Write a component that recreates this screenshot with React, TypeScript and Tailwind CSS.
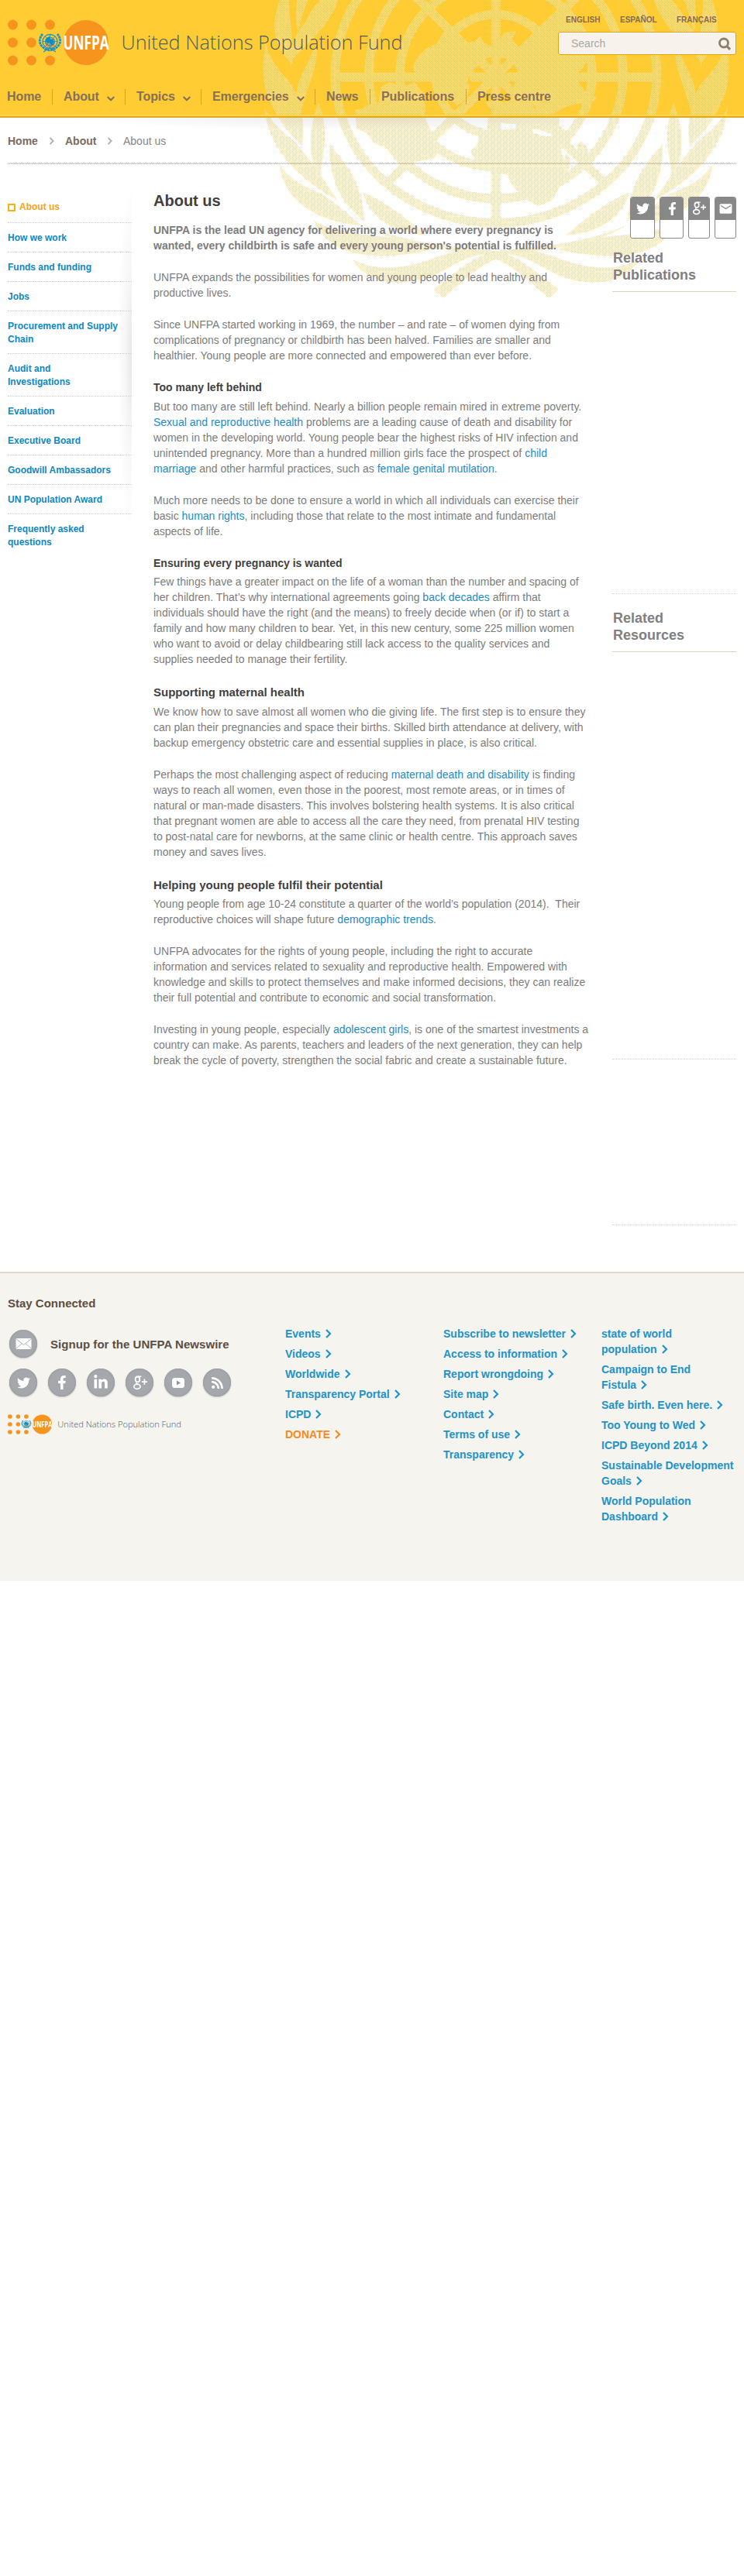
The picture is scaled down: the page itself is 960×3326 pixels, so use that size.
import React from "react";
import { FaTwitter, FaFacebookF, FaLinkedinIn, FaRss } from "react-icons/fa";
import { MdEmail } from "react-icons/md";

function Laurel() {
  return (
    <g>
      <path d="M361,0 C350,30 350,55 376,82 C380,50 372,20 373,0 Z" />
      <path d="M383,0 L398,0 C393,8 390,20 385,41 C380,25 383,10 383,0 Z" />
      <path d="M413,0 L436,0 C428,28 405,48 392,62 C385,68 378,74 375,86 C376,60 380,45 393,30 C399,18 404,9 413,0 Z" />
      <path d="M343,55 C337,85 338,115 352,138 C362,160 378,178 390,189 C394,160 390,130 374,106 C355,87 346,70 343,55 Z" />
      <path d="M408,58 C412,85 398,105 388,146 C377,125 384,105 395,85 Z" />
      <path d="M341,138 C344,175 365,220 436,259 C420,235 397,200 377,180 C360,167 346,152 341,138 Z" />
      <path d="M411,133 C425,165 418,200 412,230 C396,200 398,165 411,133 Z" />
      <path d="M425,186 C446,210 468,235 470,286 C440,262 425,235 425,186 Z" />
      <path d="M360,210 C365,255 400,285 466,291 C445,272 432,262 415,250 C390,240 370,230 360,210 Z" />
      <path d="M468,248 C478,285 510,300 550,304 C522,280 500,262 468,248 Z" />
      <path d="M405,285 C425,330 480,340 560,322 C510,298 450,310 405,285 Z" />
      <path d="M455,335 C475,370 530,375 580,345 C600,332 620,328 640,325 C600,315 570,330 540,340 C500,350 475,345 455,335 Z" />
      <path d="M470,290 C530,318 600,318 645,325 C675,335 690,350 721,374 L708,385 C680,360 655,338 630,330 C590,322 520,322 470,290 Z" />
    </g>
  );
}

function Emblem() {
  return (
    <svg width="960" height="400" viewBox="0 0 960 400" className="pointer-events-none absolute left-0 top-0 h-[400px] w-[960px]">
      <defs>
        <pattern id="weave" width="2" height="2" patternUnits="userSpaceOnUse">
          <rect x="0" y="0" width="1" height="1" fill="#fde2a0" />
          <rect x="1" y="1" width="1" height="1" fill="#fde2a0" />
        </pattern>
        <mask id="emblemMask" maskUnits="userSpaceOnUse" x="0" y="0" width="960" height="400">
          <g fill="#fff" stroke="none">
            <Laurel />
            <g transform="translate(1280 0) scale(-1 1)">
              <Laurel />
            </g>
            <g fill="none" stroke="#fff" strokeWidth="11.5">
              <ellipse cx="640" cy="96" rx="77.5" ry="77.5" />
              <ellipse cx="640" cy="96" rx="124" ry="119.5" />
              <ellipse cx="640" cy="96" rx="164" ry="160.5" />
              <ellipse cx="640" cy="96" rx="207.5" ry="192" />
              <path d="M432,99.500H848M640,0V288M497,-43L783,239M783,-43L497,239" />
            </g>
            <path d="M640,62 L624,55 620,46 614,52 602,56 592,43 580,36 571,43 564,56 551,62 543,69 536,78 533,88 536,95 548,103 560,104 562,118 580,128 590,136 602,128 606,112 602,104 612,96 612,90 620,82 628,75 640,73 660,77 668,92 664,108 662,128 650,132 640,129 626,132 640,150 700,150 716,146 732,137 752,133 766,131 770,126 757,120 748,108 742,96 752,88 758,78 762,65 750,40 738,18 728,12 720,26 709,38 690,45 676,58 668,60 661,50 666,40 650,42 Z" />
            <path d="M458,142 L468,140 476,134 487,138 492,112 503,106 520,112 535,106 548,122 549,154 560,176 565,197 560,205 540,208 515,212 497,190 484,186 473,172 460,166 Z" />
            <path d="M630,152 L640,150 722,148 722,162 731,170 738,182 726,194 736,204 735,215 722,242 714,256 706,262 694,266 680,258 666,245 658,235 656,226 644,224 628,220 612,206 607,195 615,188 618,177 628,170 Z" />
            <path d="M744,188 L750,182 757,190 762,206 754,210 746,198 Z" />
          </g>
          <g fill="#000">
            <path d="M645,158 L656,160 667,160 664,166 647,167 Z" />
            <path d="M685,167 C695,166 706,170 713,175 C704,178 696,174 687,171 Z" />
            <path d="M724,190 L732,196 728,203 733,207 726,204 Z" />
            <path d="M684,133 L693,143 691,138 Z" />
            <path d="M604,98 L608,106 613,108 611,112 604,106 Z" />
          </g>
        </mask>
      </defs>
      <rect width="960" height="400" fill="url(#weave)" mask="url(#emblemMask)" shapeRendering="crispEdges" />
    </svg>
  );
}

function Logo({ className, textColor }: { className: string; textColor: string }) {
  return (
    <svg viewBox="0 0 512 60" preserveAspectRatio="none" className={className}>
      <g fill="#f7941e">
        {[6.5, 30.5, 54.5].map((x) => [7, 30, 53].map((y) => <circle key={`${x}-${y}`} cx={x} cy={y} r="6.400" />))}
        <circle cx="101" cy="30" r="29" />
      </g>
      <g fill="none" stroke="#1b93c8">
        <ellipse cx="54.500" cy="28.500" rx="9.500" ry="9" strokeWidth="1.300" />
        <ellipse cx="54.500" cy="28.500" rx="6" ry="5.500" strokeWidth="1.200" />
        <path d="M54.500,19V38M45,28.500H64M48,22L61,35M61,22L48,35" strokeWidth=".8" />
        <path d="M45,19C38,27 41,37 54,40C68,37 71,27 64,19" strokeWidth="2.800" strokeDasharray="3 .7" />
        <path d="M47,39L54,37 62,42M62,39L54,37 46,42" strokeWidth="1.200" />
      </g>
      <path d="M50,24l4-2 1,4 3-1 2,4-3,5-3-4-3,1-2-4z" fill="#0090cf" />
      <text transform="translate(71.5 39) scale(.69 1)" fontFamily="Open Sans" fontWeight="700" fontSize="25" fill="#fff">UNFPA</text>
      <text x="146.500" y="39" fontFamily="Open Sans" fontWeight="300" fontSize="25" fill={textColor} textLength="363" lengthAdjust="spacingAndGlyphs">United Nations Population Fund</text>
    </svg>
  );
}

function Chevron({ className }: { className: string }) {
  return (
    <svg viewBox="0 0 8 12" className={className} fill="none" stroke="currentColor" strokeWidth="2.200">
      <path d="M1,1L6,6L1,11" />
    </svg>
  );
}

const NAV = [
  { label: "Home", w: "w-[67px]" },
  { label: "About", w: "w-[94px]", menu: true },
  { label: "Topics", w: "w-[98px]", menu: true },
  { label: "Emergencies", w: "w-[147px]", menu: true },
  { label: "News", w: "w-[71px]" },
  { label: "Publications", w: "w-[124px]" },
  { label: "Press centre", w: "w-[120px]" },
];

function Header() {
  return (
    <header className="h-[152px] bg-[#ffcc33]">
      <div className="relative z-10 flex h-[152px] flex-col justify-between border-b-2 border-[#e0a81c]">
        <div className="flex justify-between pl-[10px] pr-[10px]">
          <Logo className="mt-[25px] h-[60px] w-[512px]" textColor="#4c5a60" />
          <div className="w-[230px] pt-[20px]">
            <div className="flex h-[12px] pl-[10px] text-[10px] font-bold leading-[12px] text-[#7f6c58]">
              <span className="w-[70px]">ENGLISH</span>
              <span className="w-[73px]">ESPAÑOL</span>
              <span>FRANÇAIS</span>
            </div>
            <div className="mt-[9px] flex h-[30px] items-center justify-between rounded-[3px] border border-[#dfa413] bg-[#f7f3ec] pl-[16px] pr-[5px] text-[14px] text-[#aaa7a3]">
              <span className="leading-[20px]">Search</span>
              <svg viewBox="0 0 18 18" className="mt-[2px] size-[18px]" fill="none" stroke="#8c8069" strokeWidth="2.800">
                <circle cx="8" cy="7.500" r="5.500" />
                <path d="M11.800,11.500L16,15.800" strokeWidth="3.200" />
              </svg>
            </div>
          </div>
        </div>
        <div className="border-b-2 border-[#ffd552] pb-[13px]">
          <nav className="flex h-[20px] text-[16px] font-bold text-[#84705c]">
            {NAV.map((n, i) => (
              <div key={n.label} className={`${n.w} flex h-[20px] items-center ${i ? "border-l border-[#d3a231] pl-[14px]" : "pl-[9px]"}`}>
                <span className="leading-[20px] tracking-[-0.1px]">{n.label}</span>
                {n.menu && (
                  <svg viewBox="0 0 10 7" className="ml-[10px] mt-[4px] h-[7px] w-[10px]" fill="none" stroke="currentColor" strokeWidth="2">
                    <path d="M.7,1L5,5.300L9.300,1" />
                  </svg>
                )}
              </div>
            ))}
          </nav>
        </div>
      </div>
    </header>
  );
}

const SIDE = ["How we work", "Funds and funding", "Jobs", "Procurement and Supply Chain", "Audit and Investigations", "Evaluation", "Executive Board", "Goodwill Ambassadors", "UN Population Award"];

function Sidebar() {
  return (
    <aside className="flex h-[470px] w-[160px] text-[12px] font-bold leading-[17px] text-[#0d88c3]">
      <ul className="w-[160px] bg-[radial-gradient(ellipse_18px_230px_at_100%_45%,#e6e6e6_0%,#f6f6f6_45%,transparent_100%)]">
        <li className="flex items-center gap-[5px] border-b border-dotted border-[#cfcfb4] pb-[11px] pt-[9px] text-[#fb9f16]">
          <span className="mt-[1px] size-[10px] border-2 border-[#fbb012]" />
          About us
        </li>
        {SIDE.map((s) => (
          <li key={s} className="border-b border-dotted border-[#cfcfb4] pb-[9px] pt-[11px]">
            <div className={s.startsWith("Audit") ? "w-[100px]" : "w-[150px]"}>{s}</div>
          </li>
        ))}
        <li className="py-[11px]">
          <div className="w-[120px]">Frequently asked questions</div>
        </li>
      </ul>
    </aside>
  );
}

function A({ children }: { children: React.ReactNode }) {
  return <a className="text-[#1f8ac4]">{children}</a>;
}

function Article() {
  return (
    <main className="w-[592px] whitespace-nowrap pl-[28px] text-[14px] leading-[20px] text-[#7c7c7c]">
      <h1 className="-mt-[3px] text-[20px] font-bold leading-[24px] text-[#3f3f3f]">About us</h1>
      <p className="mt-[16px] font-bold">UNFPA is the lead UN agency for delivering a world where every pregnancy is<br />wanted, every childbirth is safe and every young person's potential is fulfilled.</p>
      <p className="mt-[21px]">UNFPA expands the possibilities for women and young people to lead healthy and<br />productive lives.</p>
      <p className="mt-[21px]">Since UNFPA started working in 1969, the number – and rate – of women dying from<br />complications of pregnancy or childbirth has been halved. Families are smaller and<br />healthier. Young people are more connected and empowered than ever before.</p>
      <h3 className="mt-[21px] font-bold text-[#3f3f3f]">Too many left behind</h3>
      <p className="mt-[5px]">But too many are still left behind. Nearly a billion people remain mired in extreme poverty.<br /><A>Sexual and reproductive health</A> problems are a leading cause of death and disability for<br />women in the developing world. Young people bear the highest risks of HIV infection and<br />unintended pregnancy. More than a hundred million girls face the prospect of <A>child</A><br /><A>marriage</A> and other harmful practices, such as <A>female genital mutilation</A>.</p>
      <p className="mt-[21px]">Much more needs to be done to ensure a world in which all individuals can exercise their<br />basic <A>human rights</A>, including those that relate to the most intimate and fundamental<br />aspects of life.</p>
      <h3 className="mt-[21px] font-bold text-[#3f3f3f]">Ensuring every pregnancy is wanted</h3>
      <p className="mt-[4px]">Few things have a greater impact on the life of a woman than the number and spacing of<br />her children. That’s why international agreements going <A>back decades</A> affirm that<br />individuals should have the right (and the means) to freely decide when (or if) to start a<br />family and how many children to bear. Yet, in this new century, some 225 million women<br />who want to avoid or delay childbearing still lack access to the quality services and<br />supplies needed to manage their fertility.</p>
      <h3 className="mt-[23px] text-[15px] font-bold text-[#3f3f3f]">Supporting maternal health</h3>
      <p className="mt-[5px]">We know how to save almost all women who die giving life. The first step is to ensure they<br />can plan their pregnancies and space their births. Skilled birth attendance at delivery, with<br />backup emergency obstetric care and essential supplies in place, is also critical.</p>
      <p className="mt-[21px]">Perhaps the most challenging aspect of reducing <A>maternal death and disability</A> is finding<br />ways to reach all women, even those in the poorest, most remote areas, or in times of<br />natural or man-made disasters. This involves bolstering health systems. It is also critical<br />that pregnant women are able to access all the care they need, from prenatal HIV testing<br />to post-natal care for newborns, at the same clinic or health centre. This approach saves<br />money and saves lives.</p>
      <h3 className="mt-[23px] text-[15px] font-bold text-[#3f3f3f]">Helping young people fulfil their potential</h3>
      <p className="mt-[4px]">Young people from age 10-24 constitute a quarter of the world’s population (2014). &nbsp;Their<br />reproductive choices will shape future <A>demographic trends</A>.</p>
      <p className="mt-[21px]">UNFPA advocates for the rights of young people, including the right to accurate<br />information and services related to sexuality and reproductive health. Empowered with<br />knowledge and skills to protect themselves and make informed decisions, they can realize<br />their full potential and contribute to economic and social transformation.</p>
      <p className="mt-[21px]">Investing in young people, especially <A>adolescent girls</A>, is one of the smartest investments a<br />country can make. As parents, teachers and leaders of the next generation, they can help<br />break the cycle of poverty, strengthen the social fabric and create a sustainable future.</p>
    </main>
  );
}

function GooglePlus({ className }: { className: string }) {
  return (
    <svg viewBox="0 0 20 20" className={className} fill="none" stroke="currentColor">
      <ellipse cx="6.800" cy="5.200" rx="3" ry="3.600" strokeWidth="1.900" />
      <path d="M7,1.300H12M6,8.800C4.500,10.200 5.500,11 7.500,12.200" strokeWidth="1.500" />
      <ellipse cx="6.300" cy="15" rx="4.300" ry="3.200" strokeWidth="1.800" />
      <path d="M12.500,8.500H20M16.200,4.700V12.300" strokeWidth="1.800" />
    </svg>
  );
}

const SHARE = [
  { w: "w-[32px]", icon: <FaTwitter className="size-[17px]" /> },
  { w: "w-[31px]", icon: <FaFacebookF className="ml-[2px] size-[17px]" /> },
  { w: "w-[28px]", icon: <GooglePlus className="-mt-[2px] size-[18px]" /> },
  { w: "w-[28px]", icon: <MdEmail className="size-[19px]" /> },
];

function Related() {
  return (
    <section className="w-[160px] text-[18px] font-bold leading-[22px] text-[#808080]">
      <div className="mt-[4px] flex justify-end gap-[6px]">
        {SHARE.map((s, i) => (
          <div key={i} className={`${s.w} h-[54px] overflow-hidden rounded-[3px] border border-[#888] bg-white`}>
            <div className="flex h-[29px] items-center justify-center bg-[#888] text-white">{s.icon}</div>
          </div>
        ))}
      </div>
      <h2 className="mt-[14px] h-[55px] border-b border-[#d5d8bf] pl-px">Related<br />Publications</h2>
      <div className="h-[390px] border-b border-dotted border-[#d5d8bf]" />
      <h2 className="mt-[20px] h-[55px] border-b border-[#d5d8bf] pl-px">Related<br />Resources</h2>
      <div className="h-[526px] border-b border-dotted border-[#d5d8bf]" />
      <div className="h-[214px] border-b border-dotted border-[#d5d8bf]" />
    </section>
  );
}

function FooterLinks({ links, className }: { links: string[]; className: string }) {
  return (
    <ul className={`${className} flex flex-col gap-[6px] text-[14px] font-bold leading-[20px] text-[#2193c9]`}>
      {links.map((l) => (
        <li key={l} className={l === "DONATE" ? "text-[#f6891f]" : ""}>
          {l.split("|").map((part, i, all) => (
            <div key={part} className="flex items-center whitespace-nowrap">
              {part}
              {i === all.length - 1 && <Chevron className="ml-[6px] h-[12px] w-[8px]" />}
            </div>
          ))}
        </li>
      ))}
    </ul>
  );
}

const DISC = "flex size-[36px] items-center justify-center rounded-full bg-[#a4a7ab] text-white shadow-[0_1px_2px_#bbb,inset_0_0_2px_#888]";

function Footer() {
  return (
    <footer className="relative flex h-[399px] border-t-2 border-[#e0d8c9] bg-[#f6f4ef] pl-[10px]">
      <div className="w-[358px] pt-[29px] text-[#5b4e43]">
        <h2 className="text-[15px] font-bold leading-[20px]">Stay Connected</h2>
        <div className="ml-[2px] mt-[24px] flex h-[36px] items-center gap-[17px]">
          <div className={DISC}>
            <svg viewBox="0 0 20 14" className="h-[14px] w-[21px]" stroke="#a4a7ab" strokeWidth=".9">
              <rect width="20" height="14" rx="1" fill="#fff" stroke="none" />
              <path d="M0,.5L10,8.500L20,.5M0,13.500L7.500,6.800M20,13.500L12.500,6.800" fill="none" />
            </svg>
          </div>
          <span className="pt-px text-[15px] font-bold leading-[20px] tracking-[0.05px]">Signup for the UNFPA Newswire</span>
        </div>
        <div className="ml-[2px] mt-[14px] flex gap-[14px]">
          <div className={DISC}><FaTwitter className="size-[17px]" /></div>
          <div className={DISC}><FaFacebookF className="size-[18px]" /></div>
          <div className={DISC}><FaLinkedinIn className="size-[20px]" /></div>
          <div className={DISC}><GooglePlus className="size-[19px]" /></div>
          <div className={DISC}>
            <svg viewBox="0 0 16 13" className="h-[13px] w-[16px]">
              <rect width="16" height="13" rx="3.500" fill="#fff" />
              <path d="M6,3.500L11,6.500L6,9.500Z" fill="#8f9296" />
            </svg>
          </div>
          <div className={DISC}><FaRss className="size-[17px]" /></div>
        </div>
        <Logo className="mt-[23px] h-[26px] w-[225px]" textColor="#55585a" />
      </div>
      <FooterLinks className="w-[204px] pt-[68px]" links={["Events", "Videos", "Worldwide", "Transparency Portal", "ICPD", "DONATE"]} />
      <FooterLinks className="w-[204px] pt-[68px]" links={["Subscribe to newsletter", "Access to information", "Report wrongdoing", "Site map", "Contact", "Terms of use", "Transparency"]} />
      <FooterLinks className="w-[180px] pt-[68px]" links={["state of world|population", "Campaign to End|Fistula", "Safe birth. Even here.", "Too Young to Wed", "ICPD Beyond 2014", "Sustainable Development|Goals", "World Population|Dashboard"]} />
    </footer>
  );
}

export default function App() {
  return (
    <div className="relative h-[3326px] w-[960px] overflow-hidden bg-white font-['Liberation_Sans',Arial,sans-serif]">
      <Header />
      <Emblem />
      <div className="relative h-[1490px]">
        <div className="h-[58px] bg-[radial-gradient(ellipse_400px_16px_at_50%_0,rgba(0,0,0,0.08),transparent)] pl-[10px] pr-[10px] pt-[20px]">
          <div className="flex h-[20px] items-center text-[14px] font-bold leading-[20px] text-[#7b6b5e]">
            <span className="w-[53px]">Home</span>
            <Chevron className="mr-[13px] h-[10px] w-[8px] text-[#b7ada3]" />
            <span className="w-[54px]">About</span>
            <Chevron className="mr-[13px] h-[10px] w-[8px] text-[#b7ada3]" />
            <span className="font-normal text-[#858585]">About us</span>
          </div>
        </div>
        <div className="mx-[10px] h-[2px] bg-[conic-gradient(#bbb_25%,transparent_0_50%,#bbb_0_75%,transparent_0)] bg-[length:2px_2px]" />
        <div className="flex px-[10px] pt-[38px]">
          <Sidebar />
          <div className="w-[620px]">
            <Article />
          </div>
          <Related />
        </div>
      </div>
      <Footer />
    </div>
  );
}
